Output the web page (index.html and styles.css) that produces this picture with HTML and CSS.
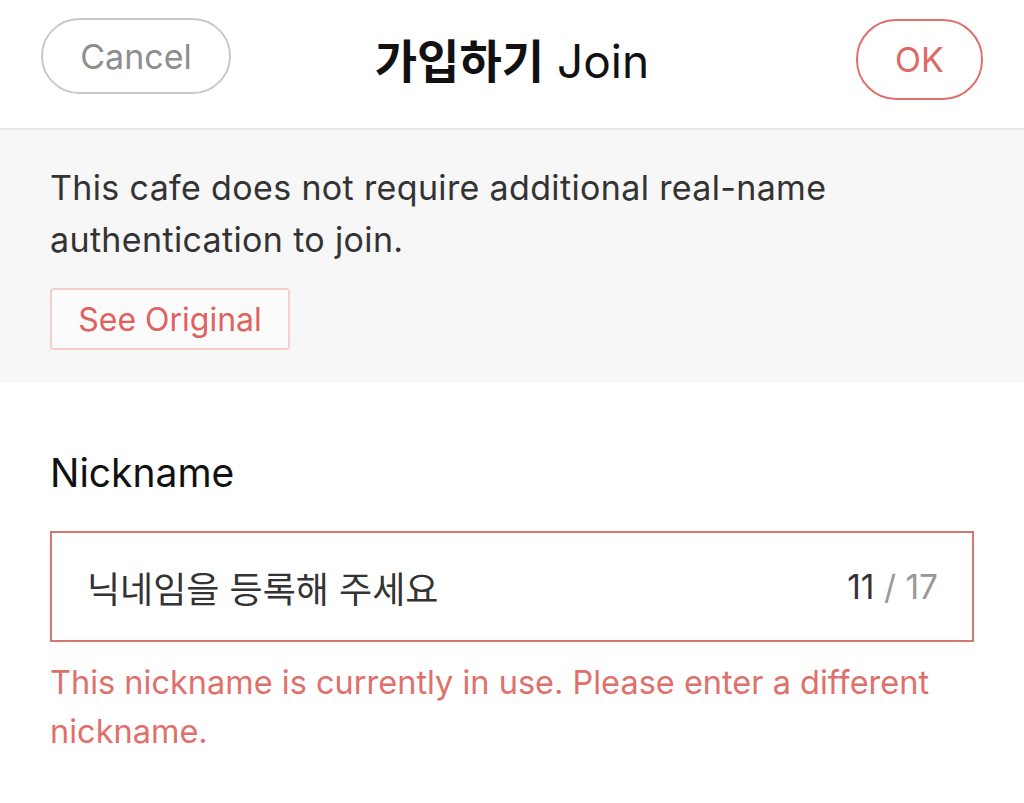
FILE: index.html
```html
<!DOCTYPE html>
<html lang="ko">
<head>
    <meta charset="UTF-8">
    <meta name="viewport" content="width=device-width, initial-scale=1.0">
    <title>가입하기 Join</title>
    <link rel="stylesheet" href="styles.css">
</head>
<body>
    <div class="topbar">
        <button class="pill cancel">Cancel</button>
        <h1 class="title"><span class="ko">가입하기</span> Join</h1>
        <button class="pill ok">OK</button>
    </div>

    <div class="notice">
        <p>This cafe does not require additional real-name authentication to join.</p>
        <button class="see-original">See Original</button>
    </div>

    <div class="form">
        <label class="field-label">Nickname</label>
        <div class="input-box error">
            <span class="input-text">닉네임을 등록해 주세요</span>
            <span class="counter"><span class="count">11</span> / 17</span>
        </div>
        <p class="error-msg">This nickname is currently in use. Please enter a different nickname.</p>
    </div>
</body>
</html>
```

FILE: styles.css
```css
body { margin: 0; background: #fff; font-family: Inter, "Noto Sans CJK KR", sans-serif; color: #222; }

.topbar { display: grid; grid-template-columns: 1fr auto 1fr; align-items: center; height: 130px; padding: 0 41px; border-bottom: 2px solid #e8e8e8; box-sizing: border-box; }
.pill { font-family: inherit; background: #fff; border-radius: 40px; cursor: pointer; }
.cancel { justify-self: start; width: 190px; height: 76px; border: 2px solid #c9c9c9; color: #8e8e8e; font-size: 34px; margin-top: -16px; }
.ok { justify-self: end; width: 127px; height: 81px; border: 2px solid #dd716c; color: #dd6a65; font-size: 34px; margin-top: -10px; }
.title { margin: 0 0 12px; font-size: 46px; font-weight: 400; color: #111; }
.title .ko { font-weight: 700; }

.notice { background: #f7f7f7; padding: 32px 50px 33px; }
.notice p { margin: 0; font-size: 34px; line-height: 52px; letter-spacing: 0.35px; color: #333; }
.see-original { margin-top: 22px; font-family: inherit; font-size: 32px; color: #e0625e; background: #fbfbfb; border: 2px solid #f6cfcd; border-radius: 4px; height: 62px; width: 240px; padding: 0; }

.form { padding: 66px 50px 40px; }
.field-label { display: block; font-size: 39px; color: #111; margin-bottom: 35px; }
.input-box { display: flex; align-items: center; justify-content: space-between; height: 111px; padding: 0 34px 0 35px; border: 2px solid #d97570; box-sizing: border-box; }
.input-text { font-size: 36px; color: #333; }
.counter { font-size: 33.5px; color: #999; }
.counter .count { color: #333; }
.error-msg { margin: 16px 0 0; font-size: 32.5px; line-height: 49px; color: #e0706c; }
```
